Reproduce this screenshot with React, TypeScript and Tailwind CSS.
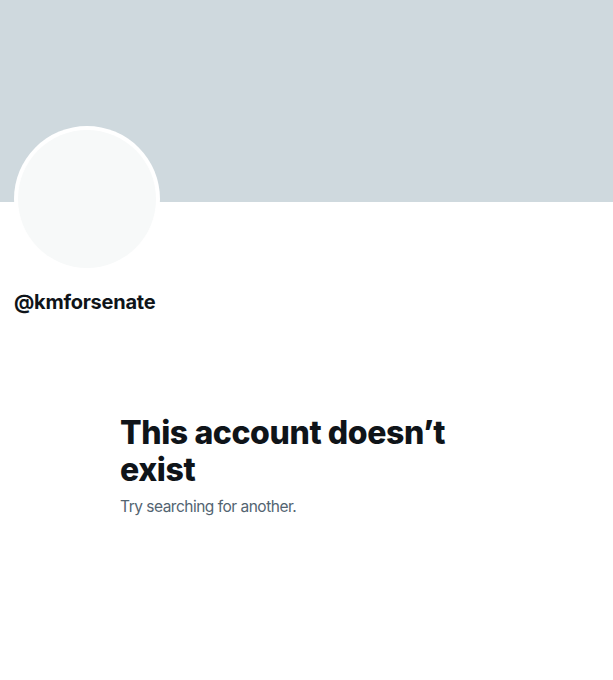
export default function App() {
  return (
    <div className="w-[613px] h-[680px] bg-white overflow-hidden" style={{ fontFamily: "Inter, 'Liberation Sans', sans-serif" }}>
      <div className="h-[202px] bg-[#cfd9de]" />
      <div className="px-[14px]">
        <div className="-mt-[76px] w-[146px] h-[146px] rounded-full bg-white p-[4px]">
          <div className="w-full h-full rounded-full bg-[#f7f9f9]" />
        </div>
        <div className="mt-[18px] text-[20px] leading-[24px] font-bold text-[#0f1419] tracking-[-0.25px]">@kmforsenate</div>
      </div>
      <div className="pl-[120px] pt-[100px]">
        <div className="w-[340px] text-[32px] leading-[37px] font-extrabold text-[#0f1419] tracking-[-0.4px]">This account doesn’t exist</div>
        <div className="mt-[9px] text-[15.5px] leading-[20px] text-[#536471] tracking-[-0.5px]">Try searching for another.</div>
      </div>
    </div>
  );
}
